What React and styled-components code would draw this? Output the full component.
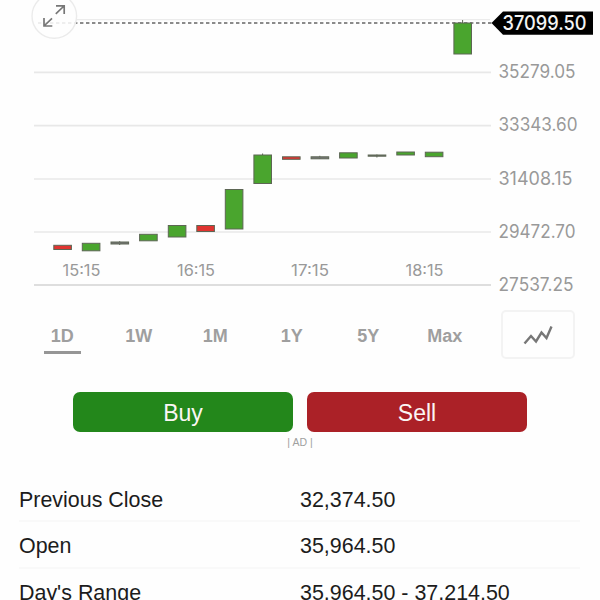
import React from 'react'
import styled, { createGlobalStyle } from 'styled-components'

const GlobalStyle = createGlobalStyle`
* { box-sizing: border-box; }
body {
    margin: 0;
    background: #fefefe;
    font-family: "Liberation Sans", Arial, sans-serif;
    overflow: hidden;
}
`

const Screen = styled.div`
width: 600px;
height: 600px;
overflow: hidden;
display: flex;
flex-direction: column;
`

const Chart = styled.svg`
display: block;
flex: none;
font-family: Inter, sans-serif;
`

const RangeBar = styled.div`
flex: none;
display: flex;
align-items: flex-start;
height: 82px;
padding: 10px 25px 0 24px;
`

const Tabs = styled.div`
display: flex;
width: 459px;
margin-right: 18px;
`

const Tab = styled.button`
flex: 1;
display: flex;
flex-direction: column;
align-items: center;
border: 0;
padding: 16px 0 0;
background: none;
font: bold 18px/21px "Liberation Sans", Arial, sans-serif;
color: #9f9f9f;

&::after {
    content: '';
    width: 37px;
    height: 3px;
    margin-top: 4px;
    background: ${props => props.$active ? '#969696' : 'transparent'};
}
`

const ChartTypeButton = styled.button`
width: 74px;
height: 49px;
padding: 0;
display: flex;
align-items: center;
justify-content: center;
border: 2px solid #f3f3f3;
border-radius: 5px;
background: #fefefe;
`

const Actions = styled.div`
flex: none;
display: flex;
gap: 14px;
padding: 0 73px;
margin-top: 10px;
`

const TradeButton = styled.button`
flex: 1;
height: 40px;
padding: 2px 0 0;
border: 0;
border-radius: 7px;
font: 23px/38px "Liberation Sans", Arial, sans-serif;
color: #fbf6f4;
background: ${props => props.$sell ? '#ab2127' : '#23871b'};
`

const AdLabel = styled.div`
flex: none;
height: 44px;
padding-top: 4px;
text-align: center;
font-size: 10.5px;
line-height: 13px;
color: #a0a0a0;
`

const Details = styled.div`
flex: none;
padding: 0 20px 0 19px;
`

const DetailRow = styled.div`
display: grid;
grid-template-columns: 281px 1fr;
height: 46.3px;
padding-top: 12px;
border-bottom: 2px solid #f9f9f9;
font-size: 21.45px;
line-height: 24px;
color: #1c1c1c;
white-space: nowrap;
`

const prices = [
    { value: '35279.05', y: 72.3, width: 76 },
    { value: '33343.60', y: 125.7, width: 78 },
    { value: '31408.15', y: 179, width: 73 },
    { value: '29472.70', y: 232, width: 76 },
    { value: '27537.25', y: 285, width: 74 }
]

const times = [
    { value: '15:15', x: 62.5 },
    { value: '16:15', x: 177 },
    { value: '17:15', x: 291 },
    { value: '18:15', x: 405.5 }
]

const green = '#4aa52e'
const red = '#e03430'
const flat = '#777'

const candles = [
    { x: 53.5, top: 245.3, bottom: 249.5, fill: red },
    { x: 82, top: 243.3, bottom: 250.8, fill: green },
    { x: 110.7, top: 242, bottom: 244, fill: flat, wick: [241.2, 245] },
    { x: 139.3, top: 234.3, bottom: 240.8, fill: green },
    { x: 168, top: 225.5, bottom: 237, fill: green },
    { x: 196.5, top: 225.5, bottom: 231.5, fill: red },
    { x: 225, top: 189.5, bottom: 229, fill: green },
    { x: 253.6, top: 155, bottom: 183.5, fill: green, wick: [153.5, 155] },
    { x: 282.2, top: 156.8, bottom: 159.3, fill: red },
    { x: 310.8, top: 156.8, bottom: 158.8, fill: flat, wick: [155.8, 159] },
    { x: 339.3, top: 152.8, bottom: 158, fill: green },
    { x: 367.9, top: 155, bottom: 156.2, fill: flat, wick: [154.5, 157.5] },
    { x: 396.5, top: 152, bottom: 155, fill: green },
    { x: 425, top: 152.2, bottom: 156.7, fill: green },
    { x: 453.6, top: 23, bottom: 54, fill: green, wick: [20, 23] }
]

const ranges = ['1D', '1W', '1M', '1Y', '5Y', 'Max']

const details = [
    { label: 'Previous Close', value: '32,374.50' },
    { label: 'Open', value: '35,964.50' },
    { label: "Day's Range", value: '35,964.50 - 37,214.50' }
]

const Candle = ({ x, top, bottom, fill, wick }) => (
    <g stroke='#5d6654' strokeWidth='1'>
        {wick && <line x1={x + 9} x2={x + 9} y1={wick[0]} y2={wick[1]} />}
        <rect x={x + 0.3} y={top} width='17.6' height={bottom - top} fill={fill} />
    </g>
)

const PriceChart = () => (
    <Chart width='600' height='300' viewBox='0 0 600 300'>
        {prices.map((price, i) => (
            <g key={price.value}>
                <line
                    x1='34' x2='491' y1={price.y} y2={price.y}
                    stroke={i === prices.length - 1 ? '#d3d3d3' : '#e8e8e8'}
                    strokeWidth='1.7'
                />
                <text
                    x='498.5' y={price.y + 5.5} fontSize='18' fill='#999'
                    textLength={price.width + 1} lengthAdjust='spacingAndGlyphs'
                >
                    {price.value}
                </text>
            </g>
        ))}
        {times.map(time => (
            <text
                key={time.value} x={time.x} y='275.6' fontSize='15.2' fill='#999'
                textLength='38' lengthAdjust='spacingAndGlyphs'
            >
                {time.value}
            </text>
        ))}
        <line x1='76' x2='490' y1='19.7' y2='19.7' stroke='#ececec' strokeWidth='1.3' />
        <line x1='38' x2='494' y1='23' y2='23' stroke='#666' strokeWidth='1.5' strokeDasharray='3.4 2.6' />
        {candles.map(candle => <Candle key={candle.x} {...candle} />)}
        <circle cx='54.3' cy='16' r='22.3' fill='#fefefe' fillOpacity='0.86' stroke='#ebebeb' strokeWidth='1.4' />
        <g fill='none' stroke='#777' strokeWidth='1.7'>
            <path d='M55.8 13.8 L64 6 M56 5.8 H64.2 V14' />
            <path d='M52 18.3 L44 26 M44 18 V26 H52.3' />
        </g>
        <path d='M491.5 23 L503 11.5 H593 V34.8 H503 Z' fill='#000' />
        <text
            x='502.5' y='30.4' fontSize='20' fontWeight='500' fill='#f4f4f4'
            textLength='84' lengthAdjust='spacingAndGlyphs'
        >
            37099.50
        </text>
    </Chart>
)

export default function App() {
    return (
        <Screen>
            <GlobalStyle />
            <PriceChart />
            <RangeBar>
                <Tabs>
                    {ranges.map(range => (
                        <Tab key={range} $active={range === '1D'}>{range}</Tab>
                    ))}
                </Tabs>
                <ChartTypeButton aria-label='Chart type'>
                    <svg width='30' height='22' viewBox='0 0 30 22' fill='none' stroke='#777' strokeWidth='2.4'>
                        <path d='M1.5 19.5 L8 12 L13 17.5 L18.5 8.5 L23.5 14 L28.5 2.5' />
                    </svg>
                </ChartTypeButton>
            </RangeBar>
            <Actions>
                <TradeButton>Buy</TradeButton>
                <TradeButton $sell>Sell</TradeButton>
            </Actions>
            <AdLabel>| AD |</AdLabel>
            <Details>
                {details.map(detail => (
                    <DetailRow key={detail.label}>
                        <span>{detail.label}</span>
                        <span>{detail.value}</span>
                    </DetailRow>
                ))}
            </Details>
        </Screen>
    )
}
